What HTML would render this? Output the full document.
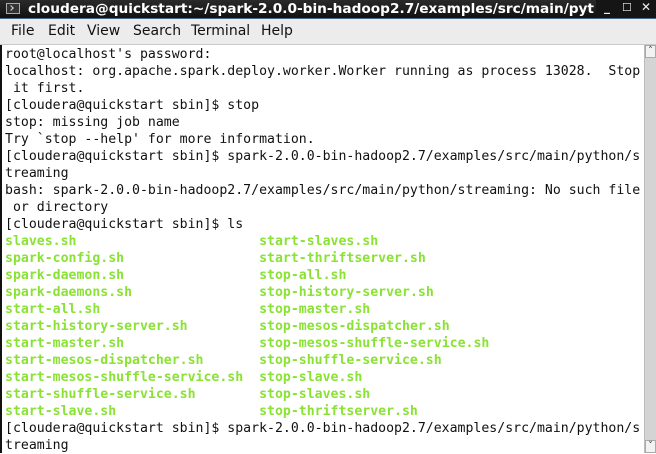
<!DOCTYPE html>
<html><head><meta charset="utf-8"><style>
html,body{margin:0;padding:0;width:656px;height:453px;overflow:hidden;background:#fff;}
.title{position:absolute;left:0;top:0;width:656px;height:18px;background:linear-gradient(#2a2a2a,#111);border-bottom:1px solid #4a6a8a;color:#fff;font:bold 13.7px "DejaVu Sans","Liberation Sans",sans-serif;line-height:18px;white-space:nowrap;overflow:hidden;}
.title .ic{position:absolute;left:6px;top:3px;width:14px;height:11px;background:#333;border:1px solid #aaa;box-sizing:border-box;}
.title .ic:after{content:"";position:absolute;left:2px;top:2px;width:3px;height:3px;border-right:1px solid #ddd;border-bottom:1px solid #ddd;transform:rotate(-45deg);}
.title .t{position:absolute;left:28px;top:0;}
.title .btn{position:absolute;top:0;width:60px;right:0;height:18px;background:#151515;}
.title .btn span{position:absolute;top:0;font:bold 12px "DejaVu Sans",sans-serif;color:#eee;}
.menu{position:absolute;left:0;top:19px;width:656px;height:25px;background:#ececec;border-bottom:1px solid #c8c8c8;font:14px "DejaVu Sans","Liberation Sans",sans-serif;color:#111;line-height:25px;}
.menu span{position:absolute;top:0;}
.term{position:absolute;left:0;top:45px;width:644px;height:408px;border-left:2px solid #111;box-sizing:border-box;}
pre{margin:0;position:absolute;left:3px;top:1px;font:13.2px "DejaVu Sans Mono","Liberation Mono",monospace;line-height:17px;color:#111;}
.g{color:#8ae234;font-weight:bold;}
.sb{position:absolute;left:644px;top:45px;width:12px;height:408px;background:#d4d4d4;border-left:1px solid #bbb;box-sizing:border-box;}
.sb .a{position:absolute;left:0;width:11px;height:13px;background:#f2f2f2;border:1px solid #aaa;box-sizing:border-box;font:9px "DejaVu Sans",sans-serif;text-align:center;line-height:11px;color:#333;}
</style></head><body>
<div class="title"><div class="ic"></div><div class="t">cloudera@quickstart:~/spark-2.0.0-bin-hadoop2.7/examples/src/main/pyt</div>
<div class="btn"><span style="left:8px">_</span><span style="left:26px;font-size:11px;top:1px">☐</span><span style="left:45px">✕</span></div></div>
<div class="menu"><span style="left:11px">File</span><span style="left:48px">Edit</span><span style="left:87px">View</span><span style="left:133px">Search</span><span style="left:191px">Terminal</span><span style="left:261px">Help</span></div>
<div class="term"><pre>root@localhost's password:
localhost: org.apache.spark.deploy.worker.Worker running as process 13028.  Stop
 it first.
[cloudera@quickstart sbin]$ stop
stop: missing job name
Try `stop --help' for more information.
[cloudera@quickstart sbin]$ spark-2.0.0-bin-hadoop2.7/examples/src/main/python/s
treaming
bash: spark-2.0.0-bin-hadoop2.7/examples/src/main/python/streaming: No such file
 or directory
[cloudera@quickstart sbin]$ ls
<span class="g">slaves.sh</span>                       <span class="g">start-slaves.sh</span>
<span class="g">spark-config.sh</span>                 <span class="g">start-thriftserver.sh</span>
<span class="g">spark-daemon.sh</span>                 <span class="g">stop-all.sh</span>
<span class="g">spark-daemons.sh</span>                <span class="g">stop-history-server.sh</span>
<span class="g">start-all.sh</span>                    <span class="g">stop-master.sh</span>
<span class="g">start-history-server.sh</span>         <span class="g">stop-mesos-dispatcher.sh</span>
<span class="g">start-master.sh</span>                 <span class="g">stop-mesos-shuffle-service.sh</span>
<span class="g">start-mesos-dispatcher.sh</span>       <span class="g">stop-shuffle-service.sh</span>
<span class="g">start-mesos-shuffle-service.sh</span>  <span class="g">stop-slave.sh</span>
<span class="g">start-shuffle-service.sh</span>        <span class="g">stop-slaves.sh</span>
<span class="g">start-slave.sh</span>                  <span class="g">stop-thriftserver.sh</span>
[cloudera@quickstart sbin]$ spark-2.0.0-bin-hadoop2.7/examples/src/main/python/s
treaming</pre></div>
<div class="sb"><div class="a" style="top:0">˄</div><div class="a" style="bottom:0">˅</div></div>
</body></html>
